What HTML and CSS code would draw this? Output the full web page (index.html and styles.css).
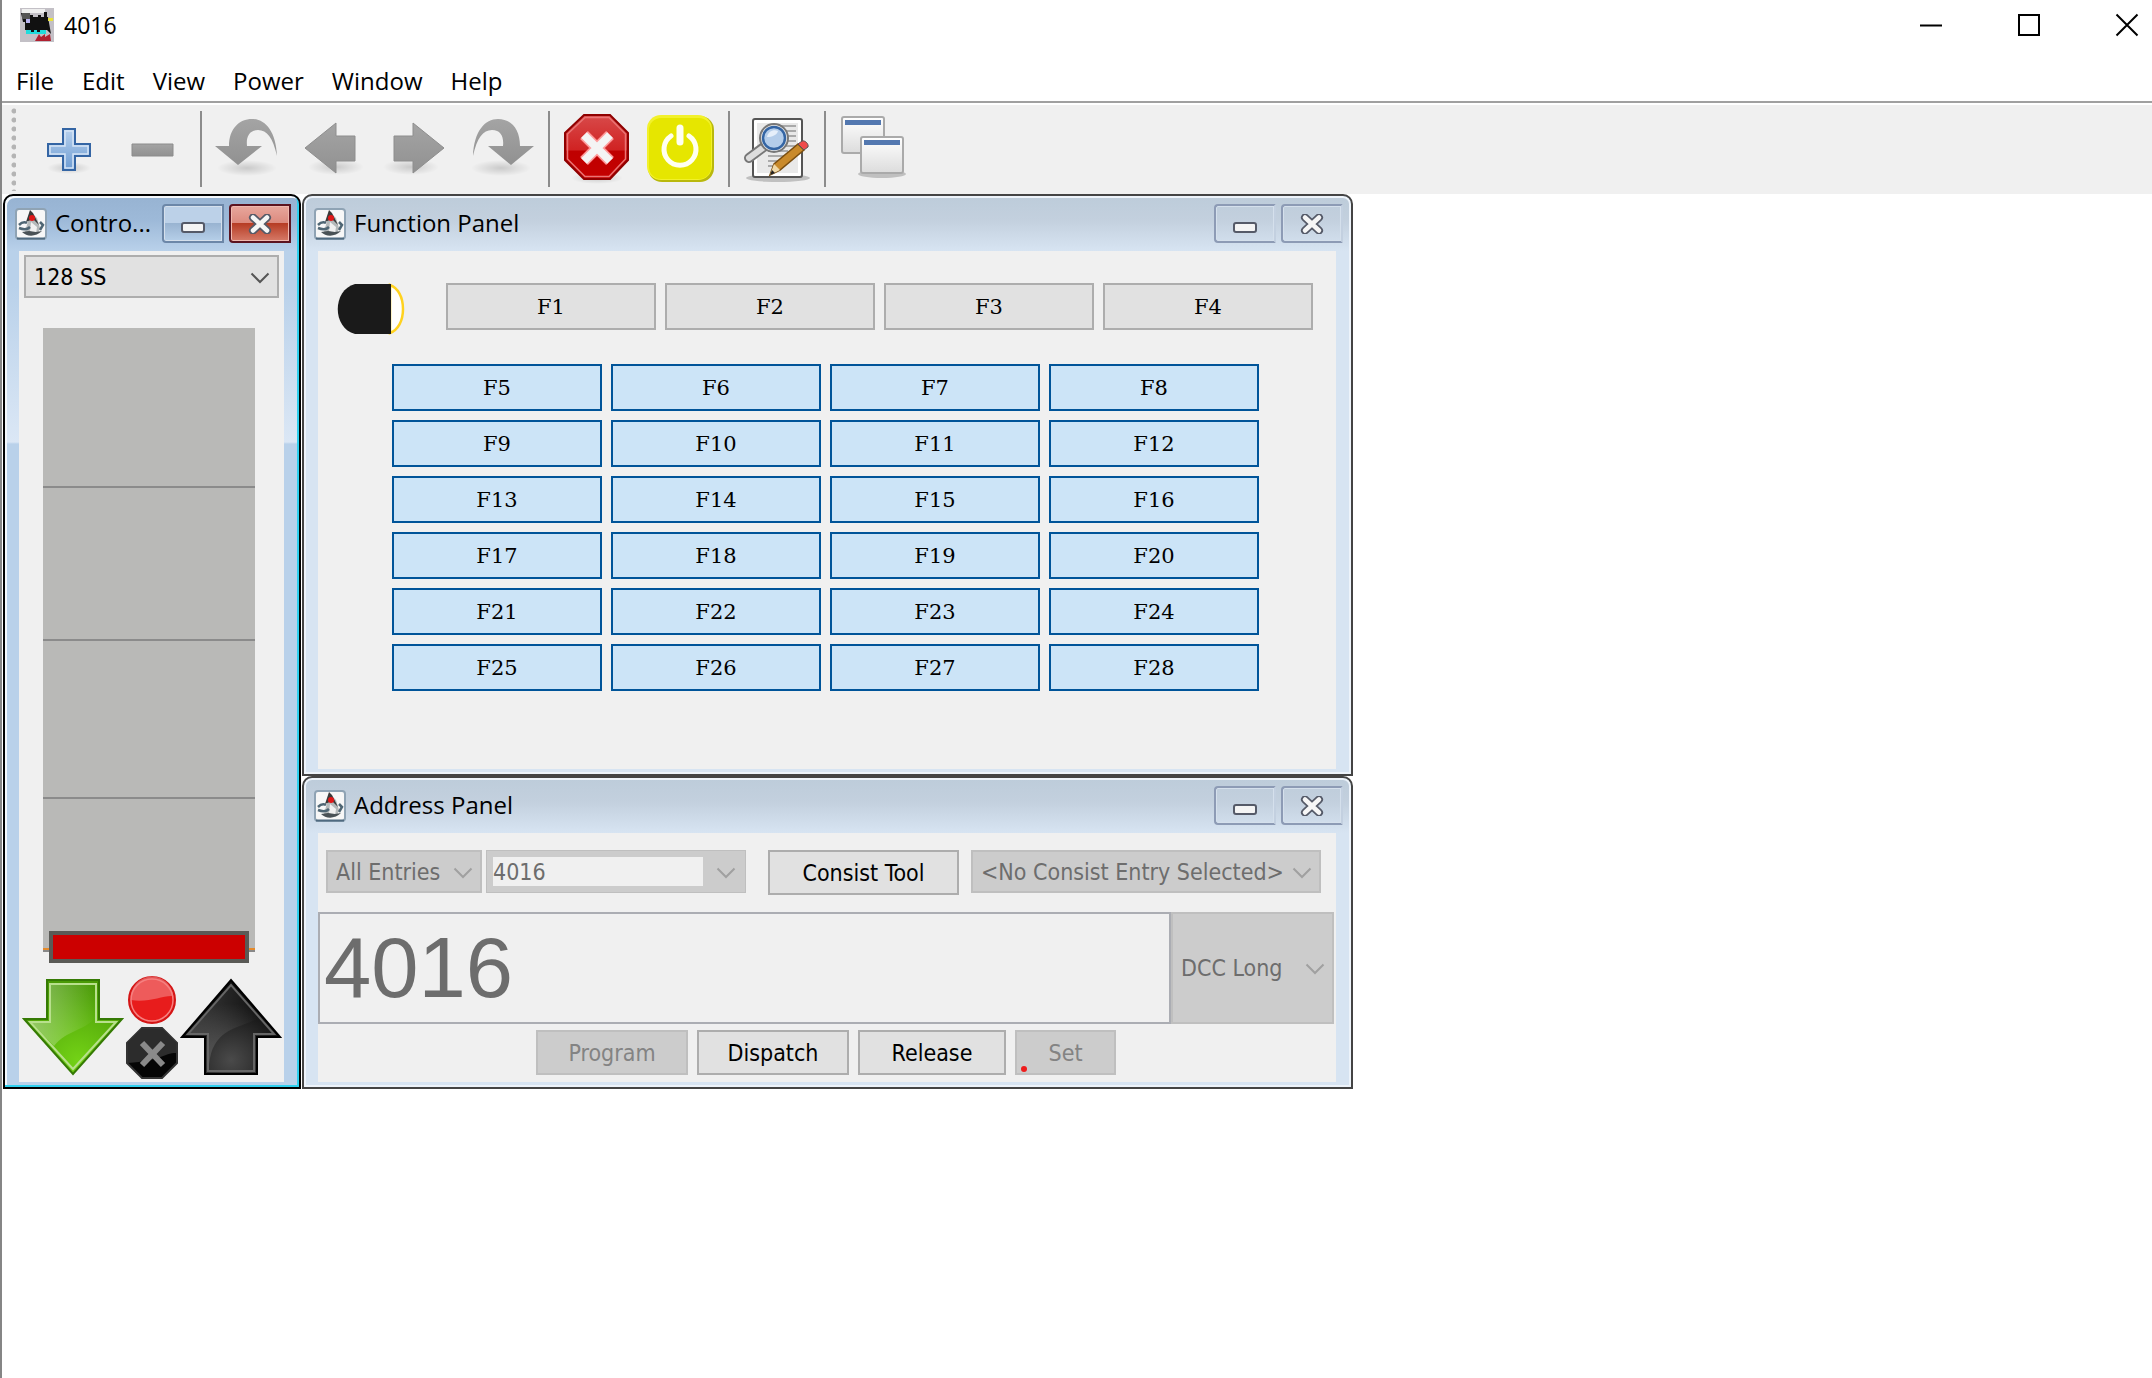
FILE: index.html
```html
<!DOCTYPE html>
<html lang="en">
<head>
<meta charset="utf-8">
<title>4016</title>
<link rel="stylesheet" href="styles.css">
</head>
<body>
<svg class="defs" aria-hidden="true">
  <defs>
    <linearGradient id="blue" x1="0" y1="0" x2="0" y2="1"><stop offset="0" stop-color="#b9d2ee"/><stop offset="1" stop-color="#6c9bd2"/></linearGradient>
    <linearGradient id="grey" x1="0" y1="0" x2="0" y2="1"><stop offset="0" stop-color="#a4a4a4"/><stop offset="1" stop-color="#919191"/></linearGradient>
    <linearGradient id="red" x1="0" y1="0" x2="0" y2="1"><stop offset="0" stop-color="#d84a4a"/><stop offset=".55" stop-color="#d02222"/><stop offset=".56" stop-color="#bf0000"/><stop offset="1" stop-color="#c40000"/></linearGradient>
    <linearGradient id="paper" x1="0" y1="0" x2="0" y2="1"><stop offset="0" stop-color="#ffffff"/><stop offset="1" stop-color="#dcdcdc"/></linearGradient>
    <radialGradient id="shade"><stop offset="0" stop-color="#000" stop-opacity=".16"/><stop offset="1" stop-color="#000" stop-opacity="0"/></radialGradient>
    <radialGradient id="green" cx=".55" cy=".85" r=".8"><stop offset="0" stop-color="#73d216"/><stop offset="1" stop-color="#4a9a06"/></radialGradient>
    <linearGradient id="gloss" x1="0" y1="0" x2="1" y2="0"><stop offset="0" stop-color="#fff" stop-opacity=".38"/><stop offset="1" stop-color="#fff" stop-opacity="0"/></linearGradient>
    <radialGradient id="dark" cx=".5" cy=".85" r=".6"><stop offset="0" stop-color="#4a4a4a"/><stop offset="1" stop-color="#111"/></radialGradient>
    <symbol id="java" viewBox="0 0 32 32">
      <rect x="1" y="1" width="30" height="30" rx="3" fill="#f7f7f7" stroke="#8fa3b4" stroke-width="2"/>
      <path d="M2 30.500h28" stroke="#4f6a80" stroke-width="2"/>
      <path d="M15 3 13 13l-3 11 5 3 8-1 2-6-3-10z" fill="#b4b9ba"/>
      <path d="M15 2l3 3 6 12-6-6-7 3z" fill="#3a3a3a"/>
      <path d="M16 14l6 5-1 7-6-3z" fill="#f0f0f0"/>
      <path d="M4 17c3-3 6-3 8-2M4 20c5 2 8 2 11-1M25 14l3 3-3 5" fill="none" stroke="#4f6674" stroke-width="2.500"/>
      <path d="M7 24c5 5 14 5 20-1l-6 1-7-1z" fill="#4a5256"/>
      <circle cx="17" cy="10" r="3" fill="#e01818"/>
    </symbol>
    <symbol id="chev" viewBox="0 0 20 12"><path d="M1.500 1.500 10 10l8.500-8.500" fill="none" stroke="currentColor" stroke-width="2"/></symbol>
    <symbol id="minb" viewBox="0 0 24 12"><rect x="1" y="1" width="22" height="9" rx="2" fill="#f4f4f4" stroke="#555a68" stroke-width="2"/></symbol>
    <symbol id="closeb" viewBox="0 0 24 20"><path d="M5 3.500 19 16.500M19 3.500 5 16.500" stroke="#555a68" stroke-width="8" stroke-linecap="round"/><path d="M5 3.500 19 16.500M19 3.500 5 16.500" stroke="#f6f6f6" stroke-width="4.500" stroke-linecap="round"/></symbol>
  </defs>
</svg>
<div class="app">
  <header class="titlebar">
    <svg class="loco" viewBox="0 0 34 34"><rect width="34" height="34" fill="#c3c0c6"/><path d="M2 1h23v4H2z" fill="#eee"/><path d="M1 5h5v2h7v2h5V7h3v2h3V4h3v5h1l3 17-4-4H5V14H3z" fill="#111"/><path d="M2 5h8v6H2z" fill="#555"/><path d="M6 11h4v4H6z" fill="#b9b4ee"/><path d="M28 10h5v3h-5z" fill="#e8e23c"/><path d="M6 22h20v4H6z" fill="#1fdcdc"/><path d="M11 20h3v4h-3zM17 20h3v4h-3z" fill="#111"/><path d="M15 33l4-7 2 3 4-3v3l5-3 1 7z" fill="#b02030"/></svg>
    <h1 class="title">4016</h1>
    <div class="caption">
      <button aria-label="Minimize"><svg viewBox="0 0 24 24"><path d="M1 12.500h22" stroke="#000" stroke-width="2"/></svg></button>
      <button aria-label="Maximize"><svg viewBox="0 0 24 24"><rect x="2" y="2" width="20" height="20" fill="none" stroke="#000" stroke-width="2"/></svg></button>
      <button aria-label="Close"><svg viewBox="0 0 24 24"><path d="M1.500 1.500l21 21M22.500 1.500l-21 21" stroke="#000" stroke-width="2"/></svg></button>
    </div>
  </header>
  <nav class="menu">
    <button>File</button><button>Edit</button><button>View</button><button>Power</button><button>Window</button><button>Help</button>
  </nav>
  <div class="toolbar">
    <i class="grip"></i>
    <button class="tool" aria-label="New throttle"><svg viewBox="0 0 70 70"><ellipse cx="35" cy="54" rx="22" ry="6" fill="url(#shade)"/><path d="M29 15h12v15h15v12H41v14H29V42H14V30h15z" fill="url(#blue)" stroke="#3465a4" stroke-width="2"/><path d="M31 17h8v15h15v8H39v14h-8V40H16v-8h15z" fill="none" stroke="#d6e5f6" stroke-width="1.500"/></svg></button>
    <button class="tool" aria-label="Remove throttle"><svg viewBox="0 0 70 70"><path d="M14 30h41v12H14z" fill="url(#grey)" stroke="#8c8c8c"/></svg></button>
    <i class="sep"></i>
    <button class="tool" aria-label="Previous"><svg viewBox="0 0 70 70"><ellipse cx="33" cy="54" rx="30" ry="8" fill="url(#shade)"/><path d="M1 32h14C15 15 25 5 38 5s24 12 25 37C59 24 53 16 44 16s-12 7-11 16h15L24 51z" fill="url(#grey)"/></svg></button>
    <button class="tool" aria-label="Back"><svg viewBox="0 0 70 70"><ellipse cx="38" cy="53" rx="28" ry="8" fill="url(#shade)"/><path d="M7 34 38 9v13h19v25H38v12z" fill="url(#grey)" stroke="#8e8e8e"/></svg></button>
    <button class="tool" aria-label="Forward"><svg viewBox="0 0 70 70"><ellipse cx="29" cy="53" rx="28" ry="8" fill="url(#shade)"/><path d="M62 34 31 9v13H12v25h19v12z" fill="url(#grey)" stroke="#8e8e8e"/></svg></button>
    <button class="tool" aria-label="Next"><svg viewBox="0 0 70 70"><ellipse cx="35" cy="54" rx="30" ry="8" fill="url(#shade)"/><path d="M68 32H54C54 15 45 5 32 5S8 17 7 42c4-18 10-26 19-26s12 7 11 16H22l23 19z" fill="url(#grey)"/></svg></button>
    <i class="sep"></i>
    <button class="tool" aria-label="Stop all"><svg viewBox="0 0 70 70"><ellipse cx="35" cy="64" rx="26" ry="6" fill="url(#shade)"/><path d="M22 1h26l18 18v27L48 65H22L3 46V19z" fill="url(#red)" stroke="#8f0000" stroke-width="2"/><path d="M23 3.500h24L63.500 20v25L47 62.500H23L5.500 45V20z" fill="none" stroke="#ea7474" stroke-width="1.500"/><path d="M22 21 48 47M48 21 22 47" stroke="#ff9a9a" stroke-width="11"/><path d="M22 21 48 47M48 21 22 47" stroke="#f4f4f4" stroke-width="8"/></svg></button>
    <button class="tool" aria-label="Power"><svg viewBox="0 0 70 70"><rect x="2" y="2" width="66" height="66" rx="14" fill="#b9b80c"/><rect x="1" y="1" width="65" height="65" rx="14" fill="#f2f12b"/><rect x="3" y="4" width="62" height="61" rx="12" fill="#e6e600"/><path d="M25 22a16 16 0 1 0 18 0" fill="none" stroke="#fffff0" stroke-width="5" stroke-linecap="round"/><path d="M34 14v14" stroke="#fffff0" stroke-width="7" stroke-linecap="round"/></svg></button>
    <i class="sep"></i>
    <button class="tool" aria-label="Edit roster entry"><svg viewBox="0 0 70 70"><ellipse cx="36" cy="64" rx="32" ry="4" fill="#000" opacity=".2"/><rect x="11" y="5" width="49" height="58" rx="2" fill="#fff" stroke="#555" stroke-width="2"/><path d="M15 9h41v50H15z" fill="#e9e9e9"/><path d="M36 12h18M42 17h12M44 22h10M46 27h8M42 32h14M26 37h20M26 42h16M26 47h18M26 52h12" stroke="#aaa" stroke-width="2"/><path d="M23 32 7 44" stroke="#777" stroke-width="10" stroke-linecap="round"/><path d="M22 33 7 44" stroke="#ddd" stroke-width="6" stroke-linecap="round"/><circle cx="32" cy="24" r="14" fill="#eee" stroke="#777" stroke-width="2"/><circle cx="32" cy="24" r="11" fill="#b4cdea" stroke="#3465a4" stroke-width="2.500"/><path d="M25 23c1-5 6-8 11-6-1 4-6 6-11 6z" fill="#e6effa"/><path d="M28 61l4-11 24-20 6 6-24 20z" fill="#c98a2b" stroke="#7a4e10" stroke-width="1.500"/><path d="M28 61l4-11 6 6z" fill="#f0d9a8"/><path d="M56 30l4-3c3-1 7 3 6 6l-4 3z" fill="#ef4b4b" stroke="#555"/><path d="M28 61l2-5 3 3z" fill="#222"/></svg></button>
    <i class="sep"></i>
    <button class="tool" aria-label="Window layout"><svg viewBox="0 0 70 70"><ellipse cx="44" cy="60" rx="24" ry="4" fill="#000" opacity=".2"/><rect x="4" y="3" width="42" height="36" rx="2" fill="url(#paper)" stroke="#aaa" stroke-width="2"/><path d="M7 6h36v5H7z" fill="#5378b0"/><rect x="23" y="23" width="42" height="36" rx="2" fill="url(#paper)" stroke="#aaa" stroke-width="2"/><path d="M26 26h36v5H26z" fill="#5378b0"/></svg></button>
  </div>
  <main class="desktop">
    <section class="frame active">
      <header class="bar"><svg class="java"><use href="#java"/></svg><h2>Contro...</h2>
        <button class="fb min" aria-label="Iconify"><svg width="24" height="12"><use href="#minb"/></svg></button>
        <button class="fb close" aria-label="Close panel"><svg width="24" height="20"><use href="#closeb"/></svg></button></header>
      <div class="body control">
        <span class="combo steps"><select aria-label="Speed steps"><option>128 SS</option></select><svg class="chev"><use href="#chev"/></svg></span>
        <input class="speed" type="range" min="0" max="126" value="0" aria-label="Speed">
        <div class="direction">
          <button aria-label="Reverse"><svg width="102" height="98" viewBox="0 0 102 98"><path d="M25 2h52v39h23L51 96 2 41h23z" fill="url(#green)" stroke="#357a04" stroke-width="2"/><path d="M28 6h46v32c-8 14-30 14-42 30L8 43h20z" fill="url(#gloss)"/><path d="M28 6h46v38h20L51 91 8 44h20z" fill="none" stroke="#b8e08c" stroke-width="2"/></svg></button>
          <div class="stops">
            <button aria-label="Stop"><svg width="50" height="50" viewBox="0 0 50 50"><circle cx="25" cy="25" r="23" fill="#e81c1c" stroke="#d41515" stroke-width="2"/><path d="M4 24a21 21 0 0 1 42-3C36 20 22 28 4 25z" fill="#fff" opacity=".28"/><circle cx="25" cy="25" r="21" fill="none" stroke="#f58080" stroke-width="1.500"/></svg></button>
            <button aria-label="Emergency stop"><svg width="52" height="52" viewBox="0 0 52 52"><path d="M16 1h20l15 15v20L36 51H16L1 36V16z" fill="#050505" stroke="#333" stroke-width="2"/><path d="M16 2h20l14 14v10C38 26 34 34 2 36V16z" fill="#2c2c2c"/><path d="M16 16l21 22M37 16 16 38" stroke="#8a8a8a" stroke-width="6"/></svg></button>
          </div>
          <button aria-label="Forward"><svg width="102" height="98" viewBox="0 0 102 98"><path d="M25 96h52V59h23L51 2 2 59h23z" fill="url(#dark)" stroke="#000" stroke-width="2"/><path d="M28 92V57H8L51 8l28 32C60 50 36 50 30 80z" fill="url(#gloss)" opacity=".5"/><path d="M28 93h46V56h20L51 7 8 56h20z" fill="none" stroke="#666" stroke-width="2"/></svg></button>
        </div>
      </div>
    </section>
    <div class="stack">
      <section class="frame">
        <header class="bar"><svg class="java"><use href="#java"/></svg><h2>Function Panel</h2>
          <button class="fb min" aria-label="Iconify"><svg width="24" height="12"><use href="#minb"/></svg></button>
          <button class="fb close" aria-label="Close panel"><svg width="24" height="20"><use href="#closeb"/></svg></button></header>
        <div class="body functions">
          <div class="first">
            <button class="light" aria-label="F0 headlight"><svg width="68" height="52" viewBox="0 0 68 52"><path d="M53 2c8 3 13 12 13 24s-5 21-13 24z" fill="#fff" stroke="#ffd21f" stroke-width="2.500"/><path d="M54 1v50H18C-5 45-5 7 18 1z" fill="#1a1a1a"/></svg></button>
            <div class="keys"><button>F1</button><button>F2</button><button>F3</button><button>F4</button></div>
          </div>
          <div class="keys on">
            <button>F5</button><button>F6</button><button>F7</button><button>F8</button>
            <button>F9</button><button>F10</button><button>F11</button><button>F12</button>
            <button>F13</button><button>F14</button><button>F15</button><button>F16</button>
            <button>F17</button><button>F18</button><button>F19</button><button>F20</button>
            <button>F21</button><button>F22</button><button>F23</button><button>F24</button>
            <button>F25</button><button>F26</button><button>F27</button><button>F28</button>
          </div>
        </div>
      </section>
      <section class="frame last">
        <header class="bar"><svg class="java"><use href="#java"/></svg><h2>Address Panel</h2>
          <button class="fb min" aria-label="Iconify"><svg width="24" height="12"><use href="#minb"/></svg></button>
          <button class="fb close" aria-label="Close panel"><svg width="24" height="20"><use href="#closeb"/></svg></button></header>
        <div class="body address">
          <div class="pick">
            <span class="combo off group"><select aria-label="Roster group" disabled><option>All Entries</option></select><svg class="chev"><use href="#chev"/></svg></span>
            <span class="combo off entry"><input type="text" value="4016" aria-label="Roster entry" disabled><svg class="chev"><use href="#chev"/></svg></span>
            <button class="btn tooling">Consist Tool</button>
            <span class="combo off consist"><select aria-label="Consist" disabled><option>&lt;No Consist Entry Selected&gt;</option></select><svg class="chev"><use href="#chev"/></svg></span>
          </div>
          <div class="number">
            <input type="text" value="4016" aria-label="Address" disabled>
            <span class="combo off protocol"><select aria-label="Protocol" disabled><option>DCC Long</option></select><svg class="chev"><use href="#chev"/></svg></span>
          </div>
          <div class="actions">
            <button class="btn wide" disabled>Program</button><button class="btn wide">Dispatch</button><button class="btn mid">Release</button><button class="btn set" disabled>Set<i class="dot"></i></button>
          </div>
        </div>
      </section>
    </div>
  </main>
</div>
</body>
</html>
```
FILE: styles.css
```css
* { box-sizing: border-box; }
body {
  margin: 0;
  background: #fff;
  color: #000;
  font: 24px/32px "Open Sans", "Noto Sans", sans-serif;
}
button { margin: 0; padding: 0; border: 0; background: none; color: inherit; font: inherit; }
svg { display: block; }
h1, h2 { margin: 0; font-size: 24px; font-weight: 400; }
.defs { position: absolute; width: 0; height: 0; }
.app { min-height: 100vh; border-left: 2px solid #858585; }

.titlebar { display: flex; align-items: center; height: 50px; padding-left: 18px; }
.loco { width: 34px; height: 34px; margin-right: 10px; }
.title { flex: 1; font-size: 23px; }
.caption { display: flex; gap: 74px; padding-right: 13px; }
.caption svg { width: 24px; height: 24px; }
.menu { display: flex; gap: 28px; height: 51px; padding: 24px 14px 14px; align-items: center; }
.toolbar {
  display: flex;
  align-items: center;
  gap: 14px;
  height: 93px;
  padding: 1px 8px 0;
  border-top: 2px solid #a0a0a0;
  background: linear-gradient(#fff 2px, #f0f0f0 2px);
}
.grip { width: 6px; height: 84px; margin-right: 4px; background: radial-gradient(circle at 4px 4px, #b4b4b4 2px, transparent 3px) 0 0 / 6px 9px; }
.tool svg { width: 70px; height: 70px; }
.sep { width: 2px; height: 76px; margin: 0 -2px; background: #8c8c8c; }

.desktop { display: flex; align-items: stretch; gap: 1px; padding-left: 1px; }
.frame {
  display: flex;
  flex-direction: column;
  border: 2px solid #444;
  border-radius: 10px 10px 0 0;
  background: linear-gradient(#bdccda, #c3d0de 24px, #d7e4f2 55px);
  box-shadow: inset 0 0 0 2px #edf3fa;
}
.active {
  width: 298px;
  border-color: #000;
  background: linear-gradient(#97b3d2, #9db9d8 24px, #b9d1ea 55px, #b9d1ea 90px, #dbe7f5 246px, #b9d1ea 248px);
  box-shadow: inset -2px -2px 0 #2fd0ee, inset 2px 2px 0 #f4f8fc;
}
.stack { display: flex; flex-direction: column; width: 1051px; }
.last { flex: 1; }
.bar { display: flex; align-items: center; height: 55px; padding: 0 8px 0 10px; }
.java { flex: none; width: 32px; height: 32px; margin-right: 8px; }
.bar h2 { flex: 1; min-width: 0; margin-top: -2px; white-space: nowrap; }
.fb {
  display: grid;
  flex: none;
  place-items: center;
  width: 62px;
  height: 39px;
  margin-left: 5px;
  border: 2px solid #8d9bb5;
  border-right-color: #c3d0e0;
  border-radius: 4px 0 0 4px;
  box-shadow: inset 0 0 0 1px #d5e0ec;
}
.fb.min { padding-top: 8px; }
.active .fb.min { background: linear-gradient(#bcd1e8 48%, #98b3d0 48%, #b6cfe9); border-color: #6c87a8; }
.active .fb.close { background: linear-gradient(#e8a79d, #dc8a7e 48%, #b53a22 48%, #d67a68); border-color: #5c1420; box-shadow: inset 0 0 0 1px #efb9b0; }
.body { flex: 1; margin: 0 15px 5px 14px; background: #f0f0f0; }

.combo, .btn, .address input { font: 23px/28px "DejaVu Sans Condensed", "DejaVu Sans", sans-serif; }
.combo { position: relative; display: flex; color: #000; }
.combo select {
  width: 100%;
  padding: 0 8px;
  border: 2px solid #adadad;
  border-radius: 0;
  background: #e1e1e1;
  color: inherit;
  font: inherit;
  appearance: none;
  opacity: 1;
}
.chev { position: absolute; right: 9px; top: calc(50% - 5px); width: 20px; height: 12px; color: #555; }
.off { color: #6d6d6d; }
.off select { border-color: #bfbfbf; background: #ccc; }
.off .chev { color: #a0a0a0; }

.control { display: flex; flex-direction: column; align-items: center; padding: 4px 0 3px; }
.steps { width: 255px; height: 43px; }
.speed {
  align-self: flex-start;
  width: 212px;
  height: 635px;
  margin: 30px 0 10px 24px;
  writing-mode: vertical-lr;
  direction: rtl;
  appearance: none;
  background:
    linear-gradient(#8b8b8b, #8b8b8b) 0 158px / 100% 2px no-repeat,
    linear-gradient(#8b8b8b, #8b8b8b) 0 311px / 100% 2px no-repeat,
    linear-gradient(#8b8b8b, #8b8b8b) 0 469px / 100% 2px no-repeat,
    linear-gradient(#b9b9b7 620px, #e58a2b 620px, #e58a2b 622px, #888 622px, #888 624px, transparent 624px);
}
.speed::-webkit-slider-thumb { appearance: none; width: 200px; height: 32px; border: 4px solid #5a5a56; background: #c00; }
.direction { display: flex; justify-content: center; gap: 2px; padding-top: 2px; }
.stops { display: grid; justify-items: center; gap: 2px; }

.functions { padding: 32px 23px 78px 19px; }
.first { display: flex; align-items: flex-start; gap: 41px; margin-bottom: 29px; }
.keys { display: grid; flex: 1; grid-template-columns: repeat(4, 1fr); grid-auto-rows: 47px; gap: 9px; }
.keys button { border: 2px solid #adadad; background: #e1e1e1; font: 21px/24px "DejaVu Serif", serif; }
.on { margin: 0 54px 0 55px; }
.on button { border-color: #005499; background: #cce4f7; }

.address { display: flex; flex-direction: column; padding-top: 17px; }
.pick { display: flex; padding: 0 15px 0 8px; }
.pick .combo { height: 43px; }
.group { width: 156px; }
.entry { flex: 1; margin: 0 22px 0 4px; padding: 6px; border: 1px solid #bfbfbf; background: #ccc; }
.entry input { width: 210px; padding: 0; border: 0; background: #f0f0f0; color: inherit; }
.btn { height: 45px; border: 2px solid #adadad; background: #e1e1e1; }
.btn:disabled { border-color: #bfbfbf; background: #ccc; color: #838383; }
.tooling { width: 191px; margin-right: 12px; }
.consist { width: 350px; }
.number { display: flex; height: 112px; margin: 17px 2px 6px 0; }
.number input {
  flex: 1;
  min-width: 0;
  padding: 0 4px;
  border: 2px solid #abadb3;
  background: #f0f0f0;
  color: #6d6d6d;
  font: 85px/100px "Liberation Sans", Arial, sans-serif;
}
.protocol { width: 163px; }
.actions { display: flex; justify-content: center; gap: 9px; padding-right: 2px; }
.wide { width: 152px; }
.mid { width: 148px; }
.set { position: relative; width: 101px; }
.dot { position: absolute; left: 4px; bottom: 1px; width: 6px; height: 6px; border-radius: 50%; background: #ee1c1c; }
```
